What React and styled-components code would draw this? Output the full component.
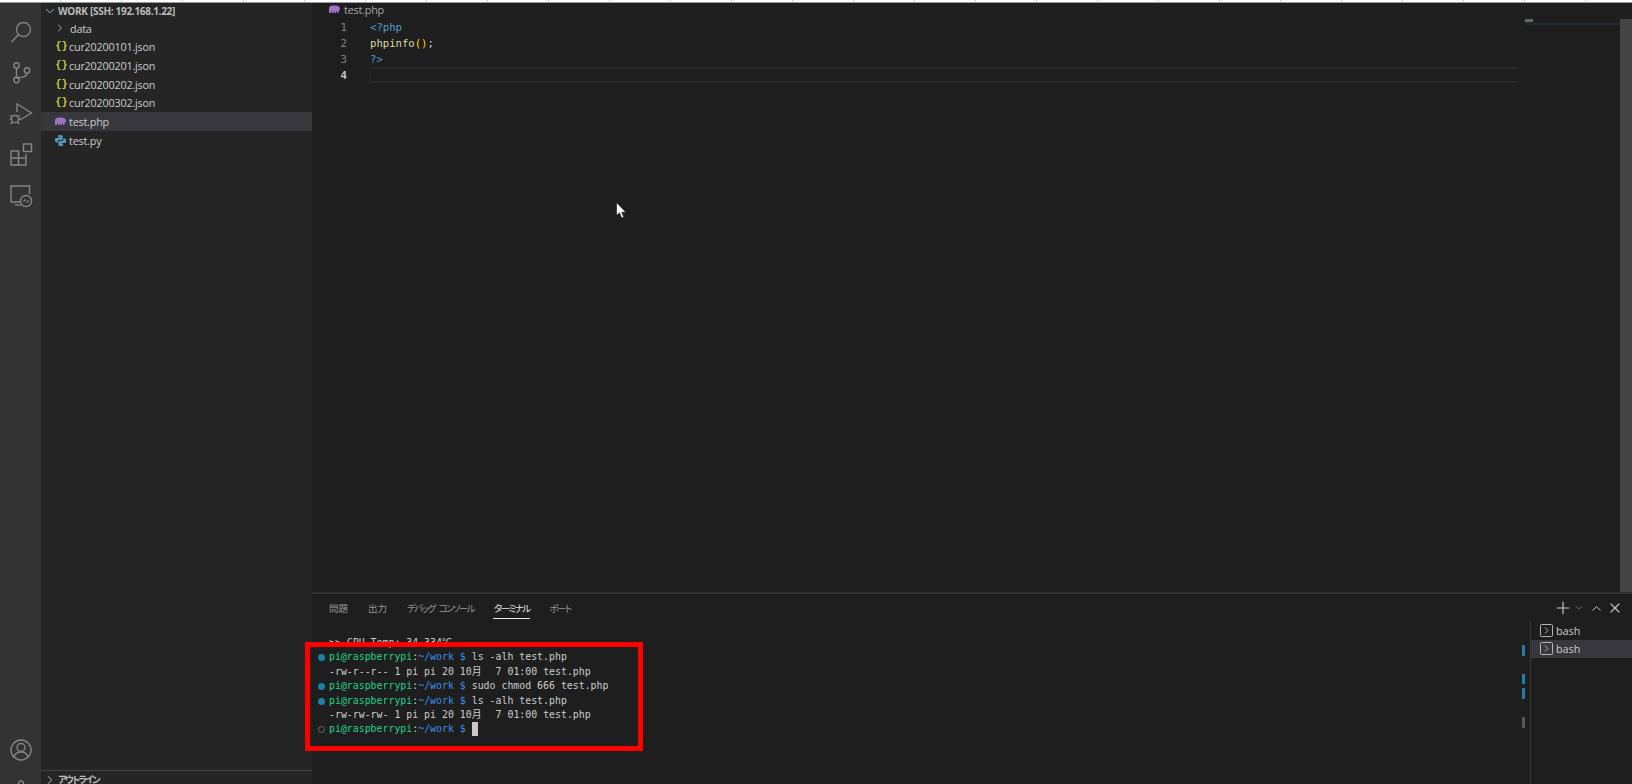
import React from 'react'
import styled, { createGlobalStyle } from 'styled-components'
import { ChevronRight, ChevronDown, ChevronUp, Plus, X, Settings } from 'lucide-react'

const files = [
  { name: 'cur20200101.json', kind: 'json' },
  { name: 'cur20200201.json', kind: 'json' },
  { name: 'cur20200202.json', kind: 'json' },
  { name: 'cur20200302.json', kind: 'json' },
  { name: 'test.php', kind: 'php', active: true },
  { name: 'test.py', kind: 'py' },
]

const tabs = [
  { label: '問題' },
  { label: '出力' },
  { label: 'デバッグ コンソール', kana: true },
  { label: 'ターミナル', kana: true, active: true },
  { label: 'ポート', kana: true },
]

function SearchIcon() {
  return (
    <svg width="24" height="24" viewBox="0 0 24 24" fill="none" stroke="currentColor" strokeWidth="1.4">
      <circle cx="14.5" cy="9.5" r="7" />
      <path d="M9.5 14.5 2.5 22" />
    </svg>
  )
}

function BranchIcon() {
  return (
    <svg width="24" height="24" viewBox="0 0 24 24" fill="none" stroke="currentColor" strokeWidth="1.4">
      <circle cx="7.500" cy="4.500" r="2.700" />
      <circle cx="7.500" cy="19" r="2.700" />
      <circle cx="18" cy="9.500" r="2.700" />
      <path d="M7.500 7.200v9.100M18 12.200c0 3-3 3.800-6 4.200-2 .3-3.500 .8-4.500 1" />
    </svg>
  )
}

function DebugIcon() {
  return (
    <svg width="24" height="24" viewBox="0 0 24 24" fill="none" stroke="currentColor" strokeWidth="1.4">
      <path d="M8 10V2L22.500 11 10.500 18" />
      <circle cx="6" cy="17" r="3.600" />
      <path d="M1 13.500l2.500 1.500M11 13.500 8.500 15M.8 17h1.700M9.500 17h1.700M1.500 22l2-2M10.500 22l-2-2M4 13l1 1M8 13l-1 1" />
    </svg>
  )
}

function ExtensionsIcon() {
  return (
    <svg width="24" height="24" viewBox="0 0 24 24" fill="none" stroke="currentColor" strokeWidth="1.4">
      <path d="M2 8h7.500v14H2zM2 15h15v7H9.500" />
      <path d="M9.500 8v7M17 15V11" />
      <rect x="14.500" y="1" width="8" height="7.500" />
    </svg>
  )
}

function RemoteIcon() {
  return (
    <svg width="24" height="24" viewBox="0 0 24 24" fill="none" stroke="currentColor" strokeWidth="1.4">
      <path d="M11 18H2V2h18.500v8" />
      <path d="M6 21h6" />
      <circle cx="17" cy="17" r="5.500" />
      <path d="M14.500 17.500l2-2M17.500 18.500l2-2" />
    </svg>
  )
}

function AccountIcon() {
  return (
    <svg width="24" height="24" viewBox="0 0 24 24" fill="none" stroke="currentColor" strokeWidth="1.4">
      <circle cx="12" cy="12" r="10" />
      <circle cx="12" cy="9.500" r="4" />
      <path d="M5 19c1-3.500 3.500-5 7-5s6 1.500 7 5" />
    </svg>
  )
}

function ElephantIcon() {
  return (
    <svg width="12" height="9" viewBox="0 0 12 9" fill="#a074c4">
      <path d="M1 8V3.500C1 1.500 2.500.5 4.500.5h3C10 .5 12 1.500 12 4c0 1.200-.6 1.800-1.500 2V8H9V6.500H8V8H6.500V6.500h-1V8H4V6.500H3V8z" />
    </svg>
  )
}

function PythonIcon() {
  return (
    <svg width="11" height="11" viewBox="0 0 11 11" fill="#519aba">
      <path d="M3.500 0h3.200l1 1v3L6.800 5H3.500L2.700 6V7.500H1L0 6.500V4l1-1h4V2.400H3V1z" />
      <path d="M7.500 11H4.300l-1-1V7l.9-1h3.300l.8-1V3.500H10l1 1V7l-1 1H6v.6h2V10z" />
    </svg>
  )
}

function TerminalGlyph() {
  return (
    <svg width="13" height="13" viewBox="0 0 13 13" fill="none" stroke="#b5b5b5" strokeWidth="1">
      <rect x="0.500" y="0.500" width="12" height="12" rx="1" />
      <path d="M5 3.500 8 6.500 5 9.500" />
    </svg>
  )
}

function Pointer() {
  return (
    <svg width="11" height="17" viewBox="0 0 11 17">
      <path d="M0.500 0.500V13.500L3.500 10.800 5.700 16 7.800 15.100 5.700 10.200H9.800z" fill="#fff" stroke="#111" strokeWidth="0.600" />
    </svg>
  )
}

function Prompt({ children }) {
  return (
    <>
      <User>pi@raspberrypi</User>:<Cwd>~/work</Cwd> <Cwd>$</Cwd> {children}
    </>
  )
}

export default function App() {
  return (
    <Page>
      <GlobalStyle />
      <TopStrip />
      <Workbench>
        <ActivityBar>
          <ActivityItem><SearchIcon /></ActivityItem>
          <ActivityItem><BranchIcon /></ActivityItem>
          <ActivityItem><DebugIcon /></ActivityItem>
          <ActivityItem><ExtensionsIcon /></ActivityItem>
          <ActivityItem><RemoteIcon /></ActivityItem>
          <ActivitySpacer />
          <ActivityItem><AccountIcon /></ActivityItem>
          <ActivityItem><Settings size={24} strokeWidth={1.4} /></ActivityItem>
        </ActivityBar>

        <Sidebar>
          <SectionHeader>
            <ChevronDown size={14} strokeWidth={1.6} />
            <span>WORK [SSH: 192.168.1.22]</span>
          </SectionHeader>
          <FileRow>
            <FolderChevron><ChevronRight size={14} strokeWidth={1.6} /></FolderChevron>
            <span>data</span>
          </FileRow>
          {files.map((file) => (
            <FileRow key={file.name} $active={file.active}>
              <FileIcon>
                {file.kind === 'json' && <JsonGlyph>{'{ }'}</JsonGlyph>}
                {file.kind === 'php' && <ElephantIcon />}
                {file.kind === 'py' && <PythonIcon />}
              </FileIcon>
              <span>{file.name}</span>
            </FileRow>
          ))}
          <OutlineHeader>
            <ChevronRight size={14} strokeWidth={1.6} />
            <span>アウトライン</span>
          </OutlineHeader>
        </Sidebar>

        <Main>
          <EditorArea>
            <EditorBody>
              <Breadcrumb>
                <ElephantIcon />
                <span>test.php</span>
              </Breadcrumb>
              <CodeLine>
                <LineNumber>1</LineNumber>
                <Code><Keyword>{'<?php'}</Keyword></Code>
              </CodeLine>
              <CodeLine>
                <LineNumber>2</LineNumber>
                <Code>
                  <Func>phpinfo</Func>
                  <Bracket>()</Bracket>;
                </Code>
              </CodeLine>
              <CodeLine>
                <LineNumber>3</LineNumber>
                <Code><Keyword>{'?>'}</Keyword></Code>
              </CodeLine>
              <CodeLine>
                <LineNumber $current>4</LineNumber>
                <Code $current />
              </CodeLine>
            </EditorBody>
            <Minimap>
              <MiniGlyph />
              <MiniLine />
            </Minimap>
            <ScrollTrack>
              <ScrollThumb />
            </ScrollTrack>
            <MousePointer><Pointer /></MousePointer>
          </EditorArea>

          <Panel>
            <PanelHeader>
              <PanelTabs>
                {tabs.map((tab) => (
                  <PanelTab key={tab.label} $active={tab.active} $kana={tab.kana}>{tab.label}</PanelTab>
                ))}
              </PanelTabs>
              <PanelActions>
                <Plus size={20} strokeWidth={1.4} />
                <SmallChevron><ChevronDown size={10} strokeWidth={1.6} /></SmallChevron>
                <ActionIcon><ChevronUp size={15} strokeWidth={1.6} /></ActionIcon>
                <CloseIcon><X size={16} strokeWidth={1.6} /></CloseIcon>
              </PanelActions>
            </PanelHeader>
            <PanelBody>
              <Terminal>
                <TermLine>{'>> CPU Temp: 34.334℃'}</TermLine>
                <TermLine $mark="ok"><Prompt>ls -alh test.php</Prompt></TermLine>
                <TermLine>-rw-r--r-- 1 pi pi 20 10<Wide>月</Wide>  7 01:00 test.php</TermLine>
                <TermLine $mark="ok"><Prompt>sudo chmod 666 test.php</Prompt></TermLine>
                <TermLine $mark="ok"><Prompt>ls -alh test.php</Prompt></TermLine>
                <TermLine>-rw-rw-rw- 1 pi pi 20 10<Wide>月</Wide>  7 01:00 test.php</TermLine>
                <TermLine $mark="idle"><Prompt><Caret /></Prompt></TermLine>
                <RedFrame />
              </Terminal>
              <Overview>
                <OverviewMark $top={23} $height={11} />
                <OverviewMark $top={52} $height={10} />
                <OverviewMark $top={66} $height={11} />
                <OverviewMark $top={95} $height={11} $idle />
              </Overview>
              <TerminalList>
                <TerminalItem><TerminalGlyph />bash</TerminalItem>
                <TerminalItem $active><TerminalGlyph />bash</TerminalItem>
              </TerminalList>
            </PanelBody>
          </Panel>
        </Main>
      </Workbench>
    </Page>
  )
}

const GlobalStyle = createGlobalStyle`
  html, body {
    margin: 0;
    padding: 0;
    background: #1e1e1e;
  }
`

const Page = styled.div`
  display: flex;
  flex-direction: column;
  width: 1632px;
  height: 784px;
  overflow: hidden;
  font-family: "Open Sans", "Noto Sans CJK JP", sans-serif;
  color: #cccccc;
`

const TopStrip = styled.div`
  flex: none;
  height: 3px;
  box-sizing: border-box;
  border-bottom: 1px solid #9a9a9a;
  background: repeating-linear-gradient(
    to right,
    #ffffff 0,
    #ffffff 60px,
    #d0d0d0 60px,
    #d0d0d0 61px
  );
`

const Workbench = styled.div`
  flex: 1;
  display: flex;
  min-height: 0;
`

const ActivityBar = styled.div`
  flex: none;
  display: flex;
  flex-direction: column;
  width: 41px;
  height: 808px;
  box-sizing: border-box;
  padding-top: 8px;
  background: #333333;
  color: #858585;
`

const ActivityItem = styled.div`
  flex: none;
  display: flex;
  align-items: center;
  justify-content: center;
  height: 41px;
`

const ActivitySpacer = styled.div`
  flex: 1;
`

const Sidebar = styled.div`
  flex: none;
  display: flex;
  flex-direction: column;
  width: 271px;
  background: #252526;
  font-size: 10.8px;
  letter-spacing: -0.2px;
`

const SectionHeader = styled.div`
  display: flex;
  align-items: center;
  gap: 1px;
  height: 16px;
  padding-left: 2px;
  font-size: 10px;
  font-weight: 700;
  letter-spacing: -0.3px;
  color: #bbbbbb;
`

const FileRow = styled.div`
  display: flex;
  align-items: center;
  height: 18.67px;
  padding-left: 13px;
  background: ${(props) => (props.$active ? '#37373d' : 'transparent')};
`

const FolderChevron = styled.span`
  display: flex;
  justify-content: center;
  width: 12px;
  margin-right: 4px;
`

const FileIcon = styled.span`
  display: flex;
  justify-content: center;
  width: 12px;
  margin-right: 3px;
`

const JsonGlyph = styled.span`
  font-family: "Liberation Mono", monospace;
  font-size: 10px;
  font-weight: 700;
  letter-spacing: -3px;
  color: #cbcb41;
`

const OutlineHeader = styled(SectionHeader)`
  flex: none;
  height: 14px;
  margin-top: auto;
  box-sizing: border-box;
  border-top: 1px solid #444444;
  padding-top: 4px;
  overflow: hidden;
  line-height: 14px;
  font-size: 9.5px;
  font-feature-settings: "palt";
  letter-spacing: -1.8px;
`

const Main = styled.div`
  flex: 1;
  display: flex;
  flex-direction: column;
  min-width: 0;
`

const EditorArea = styled.div`
  position: relative;
  flex: 1;
  display: flex;
  min-height: 0;
  background: #1e1e1e;
`

const EditorBody = styled.div`
  flex: 1;
  min-width: 0;
  padding-right: 7px;
`

const Breadcrumb = styled.div`
  display: flex;
  align-items: flex-start;
  gap: 4px;
  height: 16px;
  padding-left: 16px;
  font-size: 10.8px;
  letter-spacing: -0.2px;
  line-height: 14px;
  color: #a9a9a9;

  svg {
    margin-top: 2px;
  }
`

const CodeLine = styled.div`
  display: flex;
  height: 16px;
  line-height: 16px;
  font-family: "DejaVu Sans Mono", monospace;
  font-size: 10.6px;
`

const LineNumber = styled.div`
  flex: none;
  width: 35px;
  margin-right: 23px;
  text-align: right;
  color: ${(props) => (props.$current ? '#c6c6c6' : '#858585')};
  font-weight: ${(props) => (props.$current ? 700 : 400)};
`

const Code = styled.div`
  flex: 1;
  color: #d4d4d4;
  border: ${(props) => (props.$current ? '2px solid #282828' : 'none')};
  border-left-width: ${(props) => (props.$current ? '1px' : 0)};
  border-right: 0;
`

const Keyword = styled.span`
  color: #569cd6;
`

const Func = styled.span`
  color: #dcdcaa;
`

const Bracket = styled.span`
  color: #ffd700;
`

const Minimap = styled.div`
  flex: none;
  width: 95px;
  padding-top: 16px;
`

const MiniGlyph = styled.div`
  width: 8px;
  height: 3px;
  background: linear-gradient(#55626b 0 50%, #6e6c4c 50% 100%);
`

const MiniLine = styled.div`
  height: 2px;
  margin-top: 1px;
  background: #1f2d3a;
`

const ScrollTrack = styled.div`
  flex: none;
  width: 12px;
  padding-top: 16px;
  box-sizing: border-box;
  display: flex;
`

const ScrollThumb = styled.div`
  flex: 1;
  background: #444444;
`

const MousePointer = styled.div`
  position: absolute;
  left: 304px;
  top: 199px;
  line-height: 0;
`

const Panel = styled.div`
  flex: none;
  display: flex;
  flex-direction: column;
  height: 192px;
  box-sizing: border-box;
  border-top: 2px solid #303030;
  background: #1e1e1e;
`

const PanelHeader = styled.div`
  flex: none;
  display: flex;
  align-items: flex-start;
  justify-content: space-between;
  height: 28px;
`

const PanelTabs = styled.div`
  display: flex;
  gap: 20px;
  padding: 7px 0 0 17px;
`

const PanelTab = styled.div`
  height: 17px;
  padding: 0 ${(props) => (props.$active ? '1px' : 0)};
  margin: 0 ${(props) => (props.$active ? '-1px' : 0)};
  border-bottom: 1px solid ${(props) => (props.$active ? '#e7e7e7' : 'transparent')};
  font-size: 9.5px;
  line-height: 15px;
  color: ${(props) => (props.$active ? '#e7e7e7' : '#969696')};
  font-feature-settings: ${(props) => (props.$kana ? '"palt"' : 'normal')};
  letter-spacing: ${(props) => (props.$kana ? '-1.6px' : 0)};
  word-spacing: ${(props) => (props.$kana ? '3px' : 0)};
`

const PanelActions = styled.div`
  display: flex;
  align-items: center;
  height: 20px;
  padding: 4px 9px 0 0;
  color: #c5c5c5;
`

const SmallChevron = styled.span`
  display: flex;
  margin: 0 3px 0 1px;
  color: #a0a0a0;
`

const ActionIcon = styled.span`
  display: flex;
  margin-left: 1px;
  width: 16px;
  justify-content: center;
`

const CloseIcon = styled(ActionIcon)`
  margin-left: 3px;
`

const PanelBody = styled.div`
  flex: 1;
  display: flex;
  min-height: 0;
`

const Terminal = styled.div`
  position: relative;
  flex: 1;
  min-width: 0;
  padding-top: 14px;
  font-family: "DejaVu Sans Mono", "Noto Sans CJK JP", monospace;
  font-size: 9.9px;
  color: #cccccc;
`

const TermLine = styled.div`
  position: relative;
  height: 14.4px;
  line-height: 14.4px;
  padding-left: 17px;
  white-space: pre;

  &::before {
    content: '';
    display: ${(props) => (props.$mark ? 'block' : 'none')};
    position: absolute;
    left: 6px;
    top: 4px;
    width: 7px;
    height: 7px;
    box-sizing: border-box;
    border-radius: 50%;
    background: ${(props) => (props.$mark === 'ok' ? '#1b81a8' : 'transparent')};
    border: ${(props) => (props.$mark === 'ok' ? 'none' : '1px solid #6a6a6a')};
  }
`

const User = styled.span`
  color: #23d18b;
`

const Cwd = styled.span`
  color: #3b8eea;
`

const Wide = styled.span`
  display: inline-block;
  width: 12px;
`

const Caret = styled.span`
  display: inline-block;
  width: 6px;
  height: 14px;
  vertical-align: top;
  background: #c8c8c8;
`

const RedFrame = styled.div`
  position: absolute;
  left: -7px;
  top: 20px;
  width: 338px;
  height: 109px;
  box-sizing: border-box;
  border: 5px solid #ff0000;
  pointer-events: none;
`

const Overview = styled.div`
  position: relative;
  flex: none;
  width: 12px;
`

const OverviewMark = styled.div`
  position: absolute;
  left: 4px;
  top: ${(props) => props.$top}px;
  width: 3px;
  height: ${(props) => props.$height}px;
  background: ${(props) => (props.$idle ? '#555555' : '#1b81a8')};
`

const TerminalList = styled.div`
  flex: none;
  width: 102px;
  box-sizing: border-box;
  border-left: 1px solid #3a3a3a;
  margin-top: -1px;
`

const TerminalItem = styled.div`
  display: flex;
  align-items: center;
  gap: 3px;
  height: 18.67px;
  padding-left: 9px;
  font-size: 10.8px;
  background: ${(props) => (props.$active ? '#37373d' : 'transparent')};
`
